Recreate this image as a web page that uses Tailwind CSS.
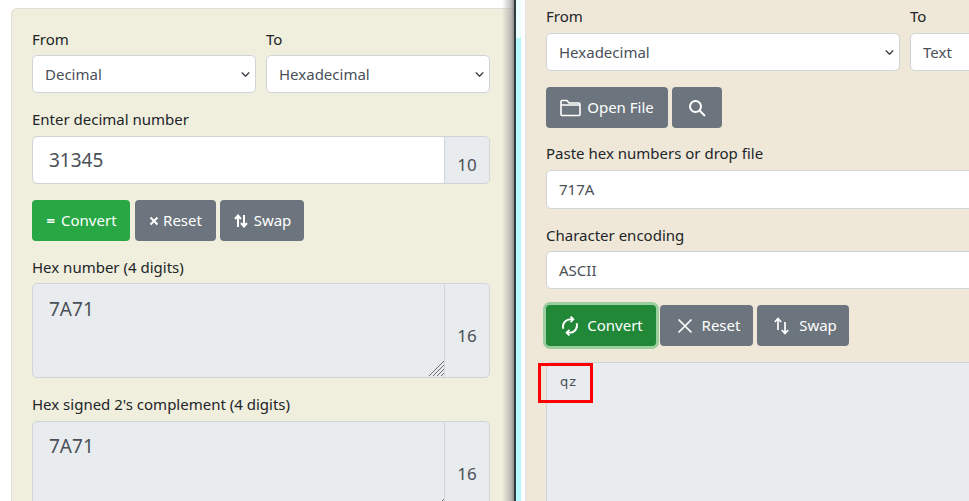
<!DOCTYPE html>
<html lang="en">
<head>
    <meta charset="UTF-8">
    <title>Number converter</title>
    <script src="https://cdn.jsdelivr.net/npm/@tailwindcss/browser@4"></script>
</head>
<body class="bg-white">
    <div class="flex w-[969px] h-[501px] overflow-hidden bg-white font-['Noto_Sans','Open_Sans',sans-serif] text-[15px] text-[#212529]">

        <!-- left window -->
        <div class="relative w-[514px] shrink-0 pl-[11px] pt-[8px]">
            <div class="h-[600px] bg-[#f0eedd] border border-[#dfdfd7] border-r-0 rounded-l-[6px] pt-[20px] pl-[20px]">
                <div class="flex gap-[10px] w-[458px]">
                    <div class="w-[224px] shrink-0">
                        <div class="h-[26px] leading-[20px]">From</div>
                        <div class="flex items-center justify-between h-[38px] bg-white border border-[#ced4da] rounded-[5px] pl-[12px] pr-[5px] pt-[1px] text-[#495057]">Decimal
                            <svg class="w-[9px] h-[9px]" viewBox="0 0 16 16" fill="none" stroke="#343a40" stroke-width="2.200" stroke-linecap="round" stroke-linejoin="round"><path d="M2 5l6 6 6-6"/></svg>
                        </div>
                    </div>
                    <div class="w-[224px] shrink-0">
                        <div class="h-[26px] leading-[20px]">To</div>
                        <div class="flex items-center justify-between h-[38px] bg-white border border-[#ced4da] rounded-[5px] pl-[12px] pr-[5px] pt-[1px] text-[#495057]">Hexadecimal
                            <svg class="w-[9px] h-[9px]" viewBox="0 0 16 16" fill="none" stroke="#343a40" stroke-width="2.200" stroke-linecap="round" stroke-linejoin="round"><path d="M2 5l6 6 6-6"/></svg>
                        </div>
                    </div>
                </div>

                <div class="mt-[16px] h-[27px] leading-[20px]">Enter decimal number</div>
                <div class="flex h-[48px] w-[458px] border border-[#ced4da] rounded-[5px] text-[#495057]">
                    <div class="flex-1 flex items-center bg-white rounded-l-[5px] pl-[16px] pt-[1px] text-[19px]">31345</div>
                    <div class="w-[45px] shrink-0 flex items-center justify-center bg-[#e9ecef] border-l border-[#ced4da] rounded-r-[5px] text-[17px] pt-[9px]">10</div>
                </div>

                <div class="flex mt-[16px] h-[41px] text-white">
                    <div class="w-[98px] flex items-center justify-center gap-[6px] pl-[1px] bg-[#28a745] rounded-[4px]"><span class="font-bold">=</span>Convert</div>
                    <div class="ml-[5px] w-[81px] flex items-center justify-center gap-[4px] bg-[#6c757d] rounded-[4px]">
                        <svg class="w-[10px] h-[10px]" viewBox="0 0 10 10" fill="none" stroke="#fff" stroke-width="2"><path d="M1.500 1.500l7 7M8.500 1.500l-7 7"/></svg>Reset</div>
                    <div class="ml-[4px] w-[84px] flex items-center justify-center gap-[6px] pl-[1px] bg-[#6c757d] rounded-[4px]">
                        <svg class="w-[14px] h-[14px]" viewBox="0 0 14 14" fill="none" stroke="#fff" stroke-width="2"><path d="M4 13V2M1 5l3-3.500L7 5M10 1v11M7 9l3 3.500L13 9"/></svg>Swap</div>
                </div>

                <div class="mt-[16px] h-[26px] leading-[20px]">Hex number (4 digits)</div>
                <div class="relative flex h-[95px] w-[458px] bg-[#e9ecef] border border-[#ced4da] rounded-[5px] text-[#495057]">
                    <div class="flex-1 pl-[16px] pt-[10px] text-[19px] leading-[30px]">7A71</div>
                    <div class="w-[45px] shrink-0 flex items-center justify-center border-l border-[#ced4da] text-[17px] pt-[11px]">16</div>
                    <svg class="absolute left-[396px] bottom-[1px] w-[15px] h-[15px]" viewBox="0 0 15 15" stroke="#6b6b6b" stroke-width="1"><path d="M0 15L15 0M4 15L15 4M8 15l7-7M12 15l3-3"/></svg>
                </div>

                <div class="mt-[16px] h-[27px] leading-[20px]">Hex signed 2's complement (4 digits)</div>
                <div class="relative flex h-[95px] w-[458px] bg-[#e9ecef] border border-[#ced4da] rounded-[5px] text-[#495057]">
                    <div class="flex-1 pl-[16px] pt-[9px] text-[19px] leading-[30px]">7A71</div>
                    <div class="w-[45px] shrink-0 flex items-center justify-center border-l border-[#ced4da] text-[17px] pt-[11px]">16</div>
                    <svg class="absolute left-[396px] bottom-[1px] w-[15px] h-[15px]" viewBox="0 0 15 15" stroke="#6b6b6b" stroke-width="1"><path d="M0 15L15 0M4 15L15 4M8 15l7-7M12 15l3-3"/></svg>
                </div>
            </div>
            <!-- shadow of the window over the page -->
            <div class="absolute right-0 top-0 bottom-0 w-[12px] bg-[linear-gradient(to_right,#a0a0a000,#a0a0a0aa_75%,#8c8c8c)]"></div>
        </div>

        <!-- window edge -->
        <div class="w-[2px] shrink-0 bg-[#2f3b3d]"></div>
        <div class="w-[9px] shrink-0 flex flex-col">
            <div class="w-[5px] h-[38px] bg-[#eafeff]"></div>
            <div class="w-[5px] flex-1 bg-[#b5f8fc]"></div>
        </div>

        <!-- right window -->
        <div class="relative flex-1 min-w-0 bg-[#efe8d8] border-l border-[#e2e2e2] pl-[20px] pt-[6px]">
            <div class="flex gap-[10px] w-[600px]">
                <div class="w-[354px]">
                    <div class="h-[27px] leading-[20px]">From</div>
                    <div class="flex items-center justify-between h-[38px] bg-white border border-[#ced4da] rounded-[5px] pl-[12px] pr-[5px] pt-[1px] text-[#495057]">Hexadecimal
                        <svg class="w-[9px] h-[9px]" viewBox="0 0 16 16" fill="none" stroke="#343a40" stroke-width="2.200" stroke-linecap="round" stroke-linejoin="round"><path d="M2 5l6 6 6-6"/></svg>
                    </div>
                </div>
                <div class="w-[200px]">
                    <div class="h-[27px] leading-[20px]">To</div>
                    <div class="flex items-center h-[38px] bg-white border border-[#ced4da] rounded-[5px] pl-[12px] pt-[1px] text-[#495057]">Text</div>
                </div>
            </div>

            <div class="flex mt-[16px] h-[41px] text-white">
                <div class="w-[122px] flex items-center justify-center gap-[6px] bg-[#6c757d] rounded-[4px]">
                    <svg class="w-[21px] h-[18px]" viewBox="0 0 21 18" fill="none" stroke="#fff" stroke-width="1.600"><path d="M1 15.500V2.500a1 1 0 0 1 1-1h5l2 2.500h9.500a1.500 1.500 0 0 1 1.500 1.500v10a1 1 0 0 1-1 1H2a1 1 0 0 1-1-1zM1 6h19"/></svg>Open File</div>
                <div class="ml-[4px] w-[50px] flex items-center justify-center bg-[#6c757d] rounded-[4px]">
                    <svg class="w-[18px] h-[18px]" viewBox="0 0 18 18" fill="none" stroke="#fff" stroke-width="2"><circle cx="7.500" cy="7.500" r="5.500"/><path d="M11.500 11.500L17 17"/></svg>
                </div>
            </div>

            <div class="mt-[15px] h-[27px] leading-[20px]">Paste hex numbers or drop file</div>
            <div class="flex items-center h-[39px] w-[600px] bg-white border border-[#ced4da] rounded-[5px] pl-[12px] text-[#495057]">717A</div>

            <div class="mt-[16px] h-[26px] leading-[20px]">Character encoding</div>
            <div class="flex items-center h-[38px] w-[600px] bg-white border border-[#ced4da] rounded-[5px] pl-[12px] pt-[1px] text-[#495057]">ASCII</div>

            <div class="flex mt-[16px] h-[41px] text-white">
                <div class="w-[110px] flex items-center justify-center gap-[8px] pl-[2px] bg-[#218838] rounded-[4px] ring-[3px] ring-[#9ccf9f]">
                    <svg class="w-[18px] h-[20px]" viewBox="0 0 16 18" fill="none" stroke="#fff" stroke-width="1.700"><path d="M2 11.500A6.500 6.500 0 0 1 8 3h2.500M14 6.500A6.500 6.500 0 0 1 8 15H5.500"/><path d="M8.500 0.500L11 3 8.500 5.500M7.500 12.500L5 15l2.500 2.500"/></svg>Convert</div>
                <div class="ml-[4px] w-[93px] flex items-center justify-center gap-[9px] pl-[4px] bg-[#6c757d] rounded-[4px]">
                    <svg class="w-[16px] h-[16px]" viewBox="0 0 16 16" fill="none" stroke="#fff" stroke-width="1.700"><path d="M1.500 1.500l13 13M14.500 1.500l-13 13"/></svg>Reset</div>
                <div class="ml-[4px] w-[92px] flex items-center justify-center gap-[9px] pl-[4px] bg-[#6c757d] rounded-[4px]">
                    <svg class="w-[17px] h-[18px]" viewBox="0 0 17 18" fill="none" stroke="#fff" stroke-width="1.700"><path d="M5 13V2M1.800 5L5 1.500 8.200 5M12 5v11M8.800 13l3.200 3.500 3.200-3.500"/></svg>Swap</div>
            </div>

            <div class="mt-[16px] h-[200px] w-[600px] bg-[#e9ecef] border border-[#ced4da] rounded-[5px] pl-[13px] pt-[9px] text-[13px] leading-[20px] tracking-[1px] text-[#495057] font-['DejaVu_Sans',sans-serif]">qz</div>

            <!-- annotation on top of the output -->
            <div class="absolute left-[12px] top-[363px] w-[55px] h-[40px] border-[3px] border-[#ff0000]"></div>
        </div>
    </div>
</body>
</html>
